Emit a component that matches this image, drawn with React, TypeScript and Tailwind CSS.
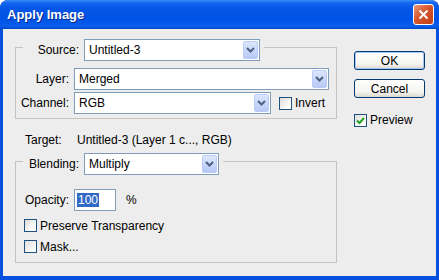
import React from 'react';

const Chevron: React.FC = () => (
  <svg width="9" height="6" viewBox="0 0 9 6">
    <path d="M1 1 L4.5 4.5 L8 1" fill="none" stroke="#4D6185" strokeWidth="2" />
  </svg>
);

const Select: React.FC<{ value: string; width: string }> = ({ value, width }) => (
  <div className={`flex h-[22px] shrink-0 items-stretch border border-[#7F9DB9] bg-white ${width}`}>
    <span className="flex-1 pl-[4px] leading-[20px] text-black">{value}</span>
    <span className="m-[1px] flex w-[15px] items-center justify-center rounded-[2px] border border-[#B9CCF8] bg-[linear-gradient(180deg,#DCE6FD,#B7CAF6)]">
      <Chevron />
    </span>
  </div>
);

const Check: React.FC<{ checked?: boolean }> = ({ checked }) => (
  <span className="flex h-[13px] w-[13px] shrink-0 items-center justify-center border border-[#1C5180] bg-[linear-gradient(135deg,#DCDCD7,#FFFFFF_80%)]">
    {checked && (
      <svg width="9" height="9" viewBox="0 0 9 9">
        <path d="M1 4.5 L3.5 7 L8 2" fill="none" stroke="#21A121" strokeWidth="2" />
      </svg>
    )}
  </span>
);

const Btn: React.FC<{ label: string; focused?: boolean }> = ({ label, focused }) => (
  <div
    className={`flex h-[19px] w-[71px] items-center justify-center rounded-[3px] border border-[#003C74] bg-[linear-gradient(180deg,#FFFFFF,#F4F4F0_70%,#DCD8CE)] text-black ${
      focused ? 'shadow-[inset_0_0_0_1px_#A9C3F2]' : ''
    }`}
  >
    {label}
  </div>
);

const App: React.FC = () => {
  return (
    <div className="h-[280px] w-[439px] bg-white font-['Liberation_Sans',Arial,sans-serif] text-[12px] text-black">
      <div className="flex h-full flex-col overflow-hidden rounded-t-[8px] bg-[#0650E0]">
        {/* Title bar */}
        <div className="flex h-[29px] shrink-0 items-center justify-between bg-[linear-gradient(180deg,#3C8CF8_0%,#1467F0_10%,#0555E6_30%,#0054E6_70%,#0A5DED_90%,#0047C8_100%)] pl-[7px] pr-[5px]">
          <span className="text-[13px] font-bold text-white [text-shadow:1px_1px_#0A2A90]">Apply Image</span>
          <div className="flex h-[21px] w-[21px] items-center justify-center rounded-[3px] border border-white bg-[linear-gradient(135deg,#E99A7A,#D6562C_45%,#C23F18)]">
            <svg width="11" height="11" viewBox="0 0 11 11">
              <path d="M1.5 1.5 L9.5 9.5 M9.5 1.5 L1.5 9.5" stroke="white" strokeWidth="2" />
            </svg>
          </div>
        </div>

        {/* Client area */}
        <div className="mx-[3px] mb-[4px] flex flex-1 bg-[#EDEDED]">
          <div className="flex flex-col pl-[12px]">
            {/* Source group */}
            <fieldset className="m-0 mt-[10px] w-[322px] min-w-0 border border-[#C5C5BE] p-0">
              <legend className="ml-[7px] p-0 pr-[4px]">
                <div className="flex h-[16px] items-start">
                  <span className="h-[22px] w-[56px] text-right leading-[22px]">Source:</span>
                  <div className="ml-[5px]">
                    <Select value="Untitled-3" width="w-[176px]" />
                  </div>
                </div>
              </legend>
              <div className="flex flex-col gap-[2px] pb-[4px] pt-[13px]">
                <div className="flex items-center">
                  <span className="w-[53px] text-right">Layer:</span>
                  <div className="ml-[5px]">
                    <Select value="Merged" width="w-[255px]" />
                  </div>
                </div>
                <div className="flex items-center">
                  <span className="w-[53px] text-right">Channel:</span>
                  <div className="ml-[5px]">
                    <Select value="RGB" width="w-[197px]" />
                  </div>
                  <div className="ml-[8px] flex items-center">
                    <Check />
                    <span className="ml-[3px]">Invert</span>
                  </div>
                </div>
              </div>
            </fieldset>

            {/* Target */}
            <div className="mt-[14px] flex h-[14px] items-center pl-[10px] leading-[14px]">
              <span className="w-[52px]">Target:</span>
              <span>Untitled-3 (Layer 1 c..., RGB)</span>
            </div>

            {/* Blending group */}
            <fieldset className="m-0 mt-[6px] w-[322px] min-w-0 border border-[#C5C5BE] p-0">
              <legend className="ml-[7px] p-0 pr-[4px]">
                <div className="flex h-[16px] items-start">
                  <span className="h-[22px] w-[56px] text-right leading-[22px]">Blending:</span>
                  <div className="ml-[5px]">
                    <Select value="Multiply" width="w-[135px]" />
                  </div>
                </div>
              </legend>
              <div className="flex flex-col pb-[9px] pt-[20px]">
                <div className="flex items-center">
                  <span className="w-[53px] text-right">Opacity:</span>
                  <div className="ml-[5px] flex h-[22px] w-[42px] items-center border border-[#7F9DB9] bg-white pl-[2px]">
                    <span className="bg-[#316AC5] px-[1px] leading-[14px] text-white">100</span>
                  </div>
                  <span className="ml-[10px]">%</span>
                </div>
                <div className="mt-[8px] flex h-[13px] items-center pl-[8px]">
                  <Check />
                  <span className="ml-[3px]">Preserve Transparency</span>
                </div>
                <div className="mt-[8px] flex h-[13px] items-center pl-[8px]">
                  <Check />
                  <span className="ml-[3px]">Mask...</span>
                </div>
              </div>
            </fieldset>
          </div>

          {/* Buttons */}
          <div className="ml-[17px] flex flex-col pt-[22px]">
            <Btn label="OK" focused />
            <div className="mt-[9px]">
              <Btn label="Cancel" />
            </div>
            <div className="mt-[13px] flex items-center">
              <Check checked />
              <span className="ml-[3px]">Preview</span>
            </div>
          </div>
        </div>
      </div>
    </div>
  );
};

export default App;
